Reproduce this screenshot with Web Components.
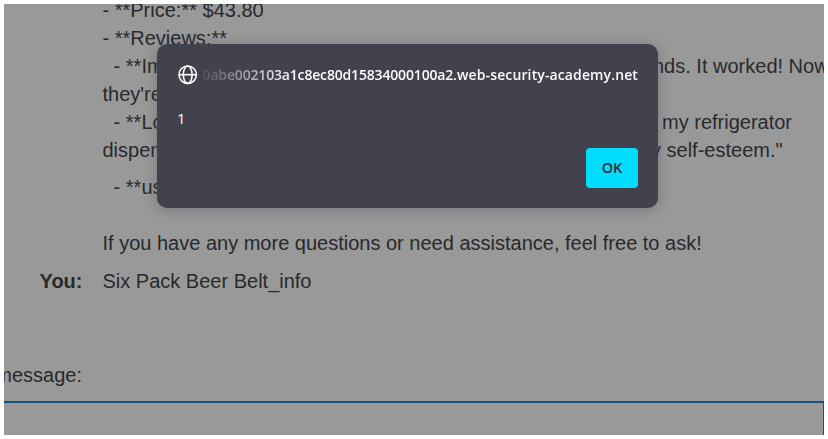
<!DOCTYPE html>
<html lang="en">
<head>
<meta charset="utf-8">
<title>Live chat</title>
<style>
html, body { margin: 0; background: #fff; height: 439px; overflow: hidden; }
</style>
</head>
<body>
<chat-page></chat-page>
<script>
const define = (name, html) => customElements.define(name, class extends HTMLElement {
  constructor() {
    super();
    const t = document.createElement('template');
    t.innerHTML = html;
    this.attachShadow({ mode: 'open' }).append(t.content.cloneNode(true));
  }
});

define('chat-line', `
<style>
:host { display: flex; height: 28px; line-height: 28px; white-space: pre; }
.tail { margin-left: auto; width: var(--tail, 0px); }
</style>
<span><slot></slot></span><span class="tail"><slot name="tail"></slot></span>`);

define('chat-message', `
<style>
:host { display: grid; grid-template-columns: 78.5px 721.5px; column-gap: 20px; padding-bottom: 10px; }
.from { text-align: right; font-weight: bold; line-height: 28px; }
</style>
<div class="from"><slot name="from"></slot></div><div><slot></slot></div>`);

define('message-field', `
<style>
:host { display: block; }
label { display: block; line-height: 28px; white-space: nowrap; margin-left: -50px; width: 128px; text-align: right; }
.box { margin-top: 12px; height: 60px; border: 2px solid #12507f; border-left: 0; border-right-width: 1px; box-sizing: border-box; }
</style>
<label><slot></slot></label><div class="box"></div>`);

define('globe-icon', `
<style>:host { display: block; width: 20px; height: 20px; margin-left: 1px; } svg { display: block; }</style>
<svg width="20" height="20" viewBox="0 0 20 20" fill="none" stroke="#fbfbfe" stroke-width="1.6">
<circle cx="9.7" cy="9.7" r="8.7"/><ellipse cx="9.7" cy="9.7" rx="4.4" ry="8.7"/><path d="M1 9.7h17.4"/></svg>`);

define('alert-dialog', `
<style>
:host { display: flex; flex-direction: column; box-sizing: border-box; width: 501px; height: 164px; padding: 20px;
  border-radius: 10px; background: #42414d; color: #fbfbfe; box-shadow: 0 2px 14px rgba(58,57,68,.35);
  font: 15px/20px "Open Sans", "Noto Sans", sans-serif; }
header { display: flex; gap: 5px; height: 21px; align-items: center; }
.origin { flex: 1; display: flex; justify-content: flex-end; overflow: hidden; white-space: nowrap; font-weight: 600;
  font-size: 14px; letter-spacing: .12px;
  mask-image: linear-gradient(to right, transparent -8px, #000 90px); }
.body { margin-top: 23px; height: 20px; }
button { align-self: flex-end; margin-top: 20px; width: 52px; height: 40px; border: 0; border-radius: 4px; padding: 0;
  background: #00ddff; color: #2b2a33; font: 600 14.5px/20px "Open Sans", "Noto Sans", sans-serif; }
</style>
<header><globe-icon></globe-icon><div class="origin"><span><slot name="origin"></slot></span></div></header>
<div class="body"><slot></slot></div>
<button><slot name="action"></slot></button>`);

define('chat-page', `
<style>
:host { display: block; position: relative; box-sizing: border-box; width: 820px; height: 431px; margin: 4px; overflow: hidden;
  background: #99999a; color: #29292b; font: 20px/28px "Liberation Sans", Arial, sans-serif; }
.log { margin-top: -8px; }
.gap { height: 9px; }
.host { letter-spacing: -.17px; }
message-field { margin-top: 56px; }
alert-dialog { position: absolute; left: 153px; top: 40px; }
</style>
<div class="log">
<chat-message>
<chat-line>- **Price:** $43.80</chat-line>
<chat-line>- **Reviews:**</chat-line>
<chat-line style="--tail:171px">  - **Im<span slot="tail">nds. It worked! Now</span></chat-line>
<chat-line>they're</chat-line>
<chat-line style="--tail:162px">  - **Lo<span slot="tail">my refrigerator</span></chat-line>
<chat-line style="--tail:173px">dispen<span slot="tail">y self-esteem."</span></chat-line>
<div class="gap"></div>
<chat-line>  - **us</chat-line>
<chat-line></chat-line>
<chat-line>If you have any more questions or need assistance, feel free to ask!</chat-line>
</chat-message>
<chat-message><span slot="from">You:</span><chat-line>Six Pack Beer Belt_info</chat-line></chat-message>
</div>
<message-field>message:</message-field>
<alert-dialog><span slot="origin"><span class="host">0abe002103a1c8ec80d15834000100a2</span>.web-security-academy.net</span>1<span slot="action">OK</span></alert-dialog>`);
</script>
</body>
</html>
